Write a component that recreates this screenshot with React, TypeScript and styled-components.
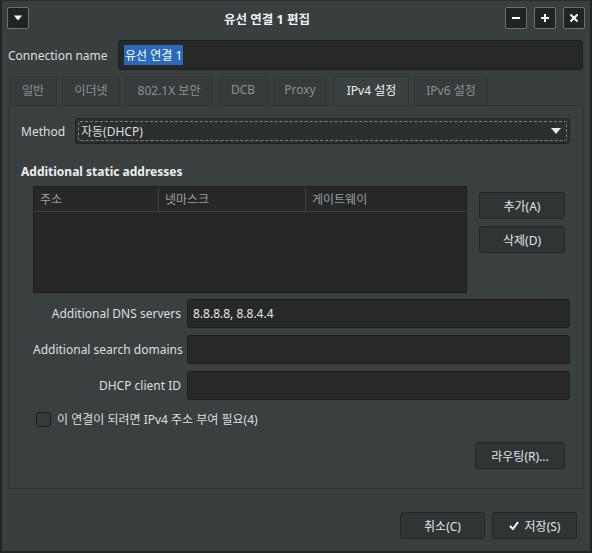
import React from "react";
import styled, { createGlobalStyle } from "styled-components";

const Global = createGlobalStyle`
  html, body { margin: 0; padding: 0; background: #393f3f; }
  body { font-family: "Noto Sans", "Noto Sans CJK KR", sans-serif; font-size: 12px; color: #dcdfdf; }
  * { box-sizing: border-box; }
`;

const Window = styled.div`
  width: 592px;
  height: 553px;
  background: #393f3f;
  border: 2px solid #222525;
  border-top: 1px solid #2a2e2e;
  display: flex;
  flex-direction: column;
`;

const TitleBar = styled.div`
  height: 34px;
  display: flex;
  align-items: center;
  padding: 0 5px 0 5px;
  gap: 8px;
`;

const TitleText = styled.div`
  flex: 1;
  text-align: center;
  font-weight: bold;
  font-size: 12.5px;
  color: #f2f2f2;
`;

const WinButton = styled.div`
  width: 22px;
  height: 22px;
  background: #222424;
  border: 1px solid #6d7171;
  border-radius: 2px;
  display: flex;
  align-items: center;
  justify-content: center;
`;

const WinButtons = styled.div`
  display: flex;
  gap: 7px;
`;

const Body = styled.div`
  flex: 1;
  padding: 5px 4px 0 6px;
  display: flex;
  flex-direction: column;
`;

const NameRow = styled.div`
  display: flex;
  align-items: center;
  height: 30px;
  padding-right: 3px;
`;

const NameLabel = styled.div`
  width: 110px;
`;

const Entry = styled.div<{ $h?: number }>`
  flex: 1;
  height: ${(p) => p.$h ?? 29}px;
  background: #272929;
  border: 1px solid #1d1f1f;
  border-radius: 3px;
  display: flex;
  align-items: center;
  padding-left: 5px;
  color: #e6e6e6;
`;

const Selected = styled.span`
  background: #2a6ab8;
  color: #ffffff;
  padding: 1px 1px;
`;

const TabBar = styled.div`
  display: flex;
  align-items: flex-end;
  gap: 5px;
  margin-top: 6px;
  padding-left: 1px;
  height: 29px;
`;

const Tab = styled.div<{ $active?: boolean; $w: number }>`
  width: ${(p) => p.$w}px;
  height: 29px;
  display: flex;
  align-items: center;
  justify-content: center;
  padding-bottom: 3px;
  border: 1px solid #323737;
  border-bottom: none;
  border-radius: 3px 3px 0 0;
  background: ${(p) => (p.$active ? "#3a4141" : "#363b3b")};
  color: ${(p) => (p.$active ? "#eeeeee" : "#8c9292")};
  margin-left: ${(p) => (p.$active ? 2 : 0)}px;
`;

const Panel = styled.div`
  height: 384px;
  margin-right: 2px;
  border: 1px solid #303535;
  background: #3a4040;
  padding: 12px 13px 0 12px;
  display: flex;
  flex-direction: column;
`;

const MethodRow = styled.div`
  display: flex;
  align-items: center;
`;

const MethodLabel = styled.div`
  width: 54px;
`;

const Combo = styled.div`
  flex: 1;
  height: 26px;
  background: #2b2f2f;
  border: 1px solid #202323;
  border-radius: 3px;
  padding: 2px;
  display: flex;
`;

const ComboInner = styled.div`
  flex: 1;
  border: 1px dashed #7a7f7f;
  border-radius: 2px;
  display: flex;
  align-items: center;
  justify-content: space-between;
  padding: 0 5px 0 2px;
`;

const SectionTitle = styled.div`
  font-weight: bold;
  margin-top: 19px;
  height: 17px;
  color: #eeeeee;
`;

const AddrRow = styled.div`
  display: flex;
  margin-top: 6px;
  padding-left: 12px;
  gap: 12px;
`;

const Table = styled.div`
  width: 434px;
  height: 107px;
  background: #262828;
  border: 1px solid #1c1e1e;
`;

const TableHead = styled.div`
  display: grid;
  grid-template-columns: 125px 147px 1fr;
  height: 25px;
  border-bottom: 1px solid #3a3e3e;
`;

const HeadCell = styled.div<{ $last?: boolean }>`
  display: flex;
  align-items: center;
  padding-left: 6px;
  color: #9a9f9f;
  border-right: ${(p) => (p.$last ? "none" : "1px solid #3a3e3e")};
`;

const SideButtons = styled.div`
  display: flex;
  flex-direction: column;
  gap: 7px;
  padding-top: 6px;
`;

const Button = styled.div<{ $w: number; $h?: number }>`
  width: ${(p) => p.$w}px;
  height: ${(p) => p.$h ?? 27}px;
  background: #2f3434;
  border: 1px solid #232727;
  border-radius: 3px;
  display: flex;
  align-items: center;
  justify-content: center;
  gap: 6px;
  color: #e2e4e4;
`;

const FormGrid = styled.div`
  display: grid;
  grid-template-columns: 148px 1fr;
  column-gap: 6px;
  row-gap: 7px;
  margin-top: 6px;
  padding-left: 12px;
`;

const FormLabel = styled.div`
  text-align: right;
  align-self: center;
  white-space: nowrap;
`;

const CheckRow = styled.div`
  display: flex;
  align-items: center;
  gap: 6px;
  margin-top: 10px;
  padding-left: 15px;
`;

const CheckBox = styled.div`
  width: 15px;
  height: 15px;
  border: 1px solid #1b1d1d;
  border-radius: 3px;
  background: #353a3a;
`;

const RouteRow = styled.div`
  display: flex;
  justify-content: flex-end;
  margin-top: 14px;
  padding-right: 5px;
`;

const Footer = styled.div`
  display: flex;
  justify-content: flex-end;
  gap: 7px;
  padding: 23px 9px 0 0;
`;

export default function App() {
  return (
    <>
      <Global />
      <Window>
        <TitleBar>
          <WinButton>
            <svg width="10" height="6" viewBox="0 0 10 6"><path d="M1 0.5 L9 0.5 L5 5.5 Z" fill="#ffffff" /></svg>
          </WinButton>
          <TitleText>유선 연결 1 편집</TitleText>
          <WinButtons>
            <WinButton>
              <svg width="10" height="10" viewBox="0 0 10 10"><rect x="1" y="4" width="8" height="2" fill="#fff" /></svg>
            </WinButton>
            <WinButton>
              <svg width="10" height="10" viewBox="0 0 10 10"><rect x="1" y="4" width="8" height="2" fill="#fff" /><rect x="4" y="1" width="2" height="8" fill="#fff" /></svg>
            </WinButton>
            <WinButton>
              <svg width="10" height="10" viewBox="0 0 10 10"><path d="M1.5 1.5 L8.5 8.5 M8.5 1.5 L1.5 8.5" stroke="#fff" strokeWidth="2" /></svg>
            </WinButton>
          </WinButtons>
        </TitleBar>
        <Body>
          <NameRow>
            <NameLabel>Connection name</NameLabel>
            <Entry $h={30}><Selected>유선 연결 1</Selected></Entry>
          </NameRow>
          <TabBar>
            <Tab $w={48}>일반</Tab>
            <Tab $w={58}>이더넷</Tab>
            <Tab $w={88}>802.1X 보안</Tab>
            <Tab $w={50}>DCB</Tab>
            <Tab $w={54}>Proxy</Tab>
            <Tab $w={75} $active>IPv4 설정</Tab>
            <Tab $w={74}>IPv6 설정</Tab>
          </TabBar>
          <Panel>
            <MethodRow>
              <MethodLabel>Method</MethodLabel>
              <Combo>
                <ComboInner>
                  <span>자동(DHCP)</span>
                  <svg width="10" height="6" viewBox="0 0 10 6"><path d="M0 0 L10 0 L5 6 Z" fill="#e8e8e8" /></svg>
                </ComboInner>
              </Combo>
            </MethodRow>
            <SectionTitle>Additional static addresses</SectionTitle>
            <AddrRow>
              <Table>
                <TableHead>
                  <HeadCell>주소</HeadCell>
                  <HeadCell>넷마스크</HeadCell>
                  <HeadCell $last>게이트웨이</HeadCell>
                </TableHead>
              </Table>
              <SideButtons>
                <Button $w={86}>추가(A)</Button>
                <Button $w={86}>삭제(D)</Button>
              </SideButtons>
            </AddrRow>
            <FormGrid>
              <FormLabel>Additional DNS servers</FormLabel>
              <Entry>8.8.8.8, 8.8.4.4</Entry>
              <FormLabel>Additional search domains</FormLabel>
              <Entry />
              <FormLabel>DHCP client ID</FormLabel>
              <Entry />
            </FormGrid>
            <CheckRow>
              <CheckBox />
              <span>이 연결이 되려면 IPv4 주소 부여 필요(4)</span>
            </CheckRow>
            <RouteRow>
              <Button $w={90}>라우팅(R)...</Button>
            </RouteRow>
          </Panel>
          <Footer>
            <Button $w={85}>취소(C)</Button>
            <Button $w={85}>
              <svg width="10" height="9" viewBox="0 0 10 9"><path d="M1 5 L4 8 L9 1" stroke="#fff" strokeWidth="2" fill="none" /></svg>
              저장(S)
            </Button>
          </Footer>
        </Body>
      </Window>
    </>
  );
}
